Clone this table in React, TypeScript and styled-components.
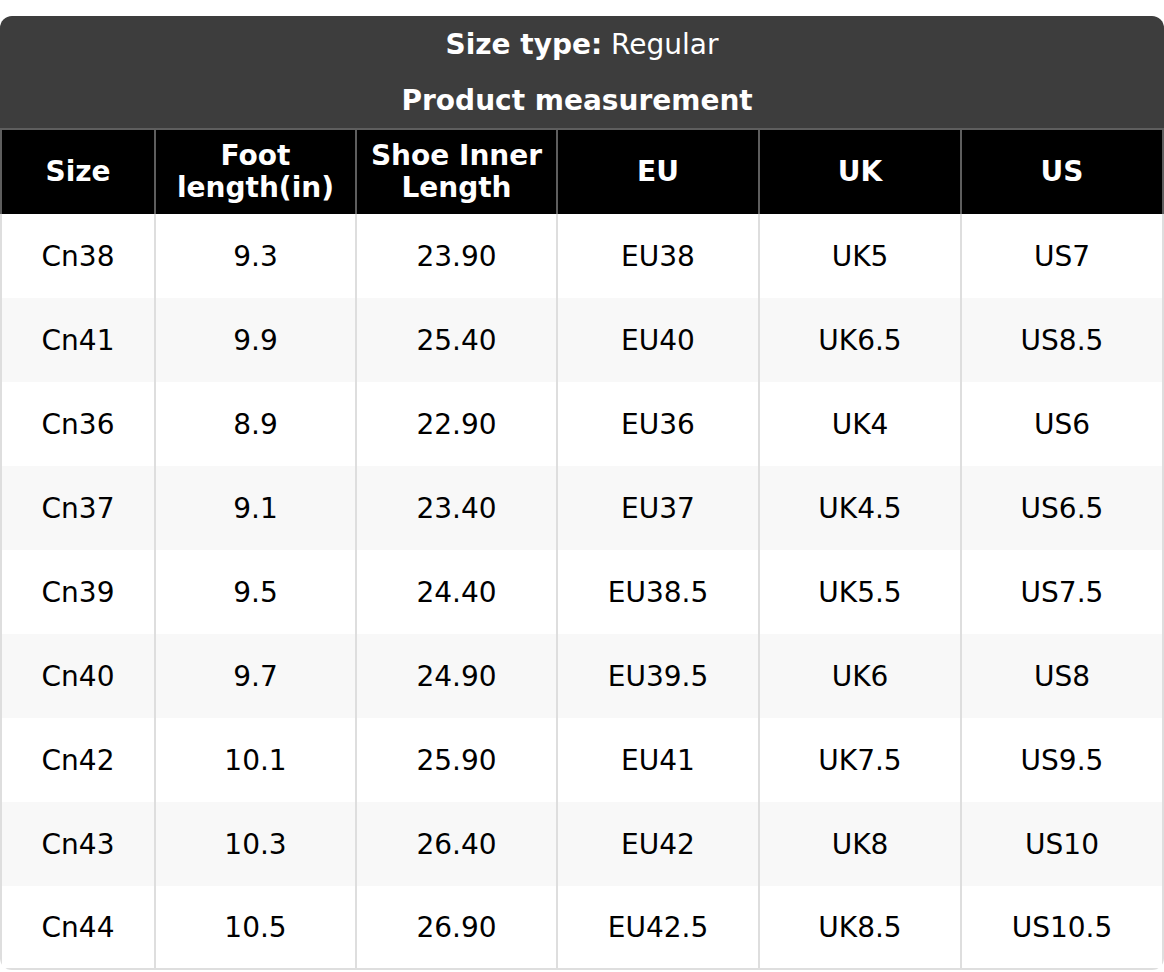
import React from "react";
import styled, { createGlobalStyle } from "styled-components";

const Global = createGlobalStyle`
  html, body { margin: 0; padding: 0; background: #ffffff; }
  body { font-family: "DejaVu Sans", "Liberation Sans", sans-serif; }
`;

const Page = styled.div`
  padding-top: 16px;
`;

const Card = styled.div`
  width: 1164px;
  border-radius: 12px;
  overflow: hidden;
  background: #ffffff;
`;

const TitleBlock = styled.div`
  background: #3d3d3d;
  color: #ffffff;
  display: flex;
  flex-direction: column;
`;

const TitleLine = styled.div<{ $bold?: boolean }>`
  height: 56px;
  display: flex;
  align-items: center;
  justify-content: center;
  font-size: 28px;
  font-weight: ${(p) => (p.$bold ? 700 : 400)};
  white-space: pre;
`;

const Strong = styled.span`
  font-weight: 700;
`;

const Table = styled.table`
  width: 1164px;
  table-layout: fixed;
  border-collapse: separate;
  border-spacing: 0;
  font-size: 28px;
`;

const HeadCell = styled.th`
  background: #000000;
  color: #ffffff;
  font-weight: 700;
  height: 86px;
  padding: 0 8px;
  box-sizing: border-box;
  border-top: 2px solid #5e5e5e;
  border-left: 2px solid #5e5e5e;
  &:last-child { border-right: 2px solid #5e5e5e; }
  line-height: 32px;
  text-align: center;
  vertical-align: middle;
`;

const Row = styled.tr<{ $alt: boolean }>`
  background: ${(p) => (p.$alt ? "#f8f8f8" : "#ffffff")};
`;

const Cell = styled.td<{ $last: boolean }>`
  height: 84px;
  padding: 0 8px;
  box-sizing: border-box;
  color: #000000;
  text-align: center;
  vertical-align: middle;
  border-left: 2px solid #dedede;
  &:last-child { border-right: 2px solid #dedede; }
  border-bottom: ${(p) => (p.$last ? "2px solid #dedede" : "none")};
`;

const widths = [154, 201, 201, 202, 202, 204];
const headers = ["Size", "Foot length(in)", "Shoe Inner Length", "EU", "UK", "US"];
const rows = [
  ["Cn38", "9.3", "23.90", "EU38", "UK5", "US7"],
  ["Cn41", "9.9", "25.40", "EU40", "UK6.5", "US8.5"],
  ["Cn36", "8.9", "22.90", "EU36", "UK4", "US6"],
  ["Cn37", "9.1", "23.40", "EU37", "UK4.5", "US6.5"],
  ["Cn39", "9.5", "24.40", "EU38.5", "UK5.5", "US7.5"],
  ["Cn40", "9.7", "24.90", "EU39.5", "UK6", "US8"],
  ["Cn42", "10.1", "25.90", "EU41", "UK7.5", "US9.5"],
  ["Cn43", "10.3", "26.40", "EU42", "UK8", "US10"],
  ["Cn44", "10.5", "26.90", "EU42.5", "UK8.5", "US10.5"],
];

export default function App() {
  return (
    <Page>
      <Global />
      <Card>
        <TitleBlock>
          <TitleLine>
            <Strong>Size type:</Strong> Regular
          </TitleLine>
          <TitleLine $bold>{"Product measurement "}</TitleLine>
        </TitleBlock>
        <Table>
          <colgroup>
            {widths.map((w, i) => (
              <col key={i} style={{ width: w }} />
            ))}
          </colgroup>
          <thead>
            <tr>
              {headers.map((h) => (
                <HeadCell key={h}>{h}</HeadCell>
              ))}
            </tr>
          </thead>
          <tbody>
            {rows.map((r, i) => (
              <Row key={r[0]} $alt={i % 2 === 1}>
                {r.map((c, j) => (
                  <Cell key={j} $last={i === rows.length - 1}>
                    {c}
                  </Cell>
                ))}
              </Row>
            ))}
          </tbody>
        </Table>
      </Card>
    </Page>
  );
}
